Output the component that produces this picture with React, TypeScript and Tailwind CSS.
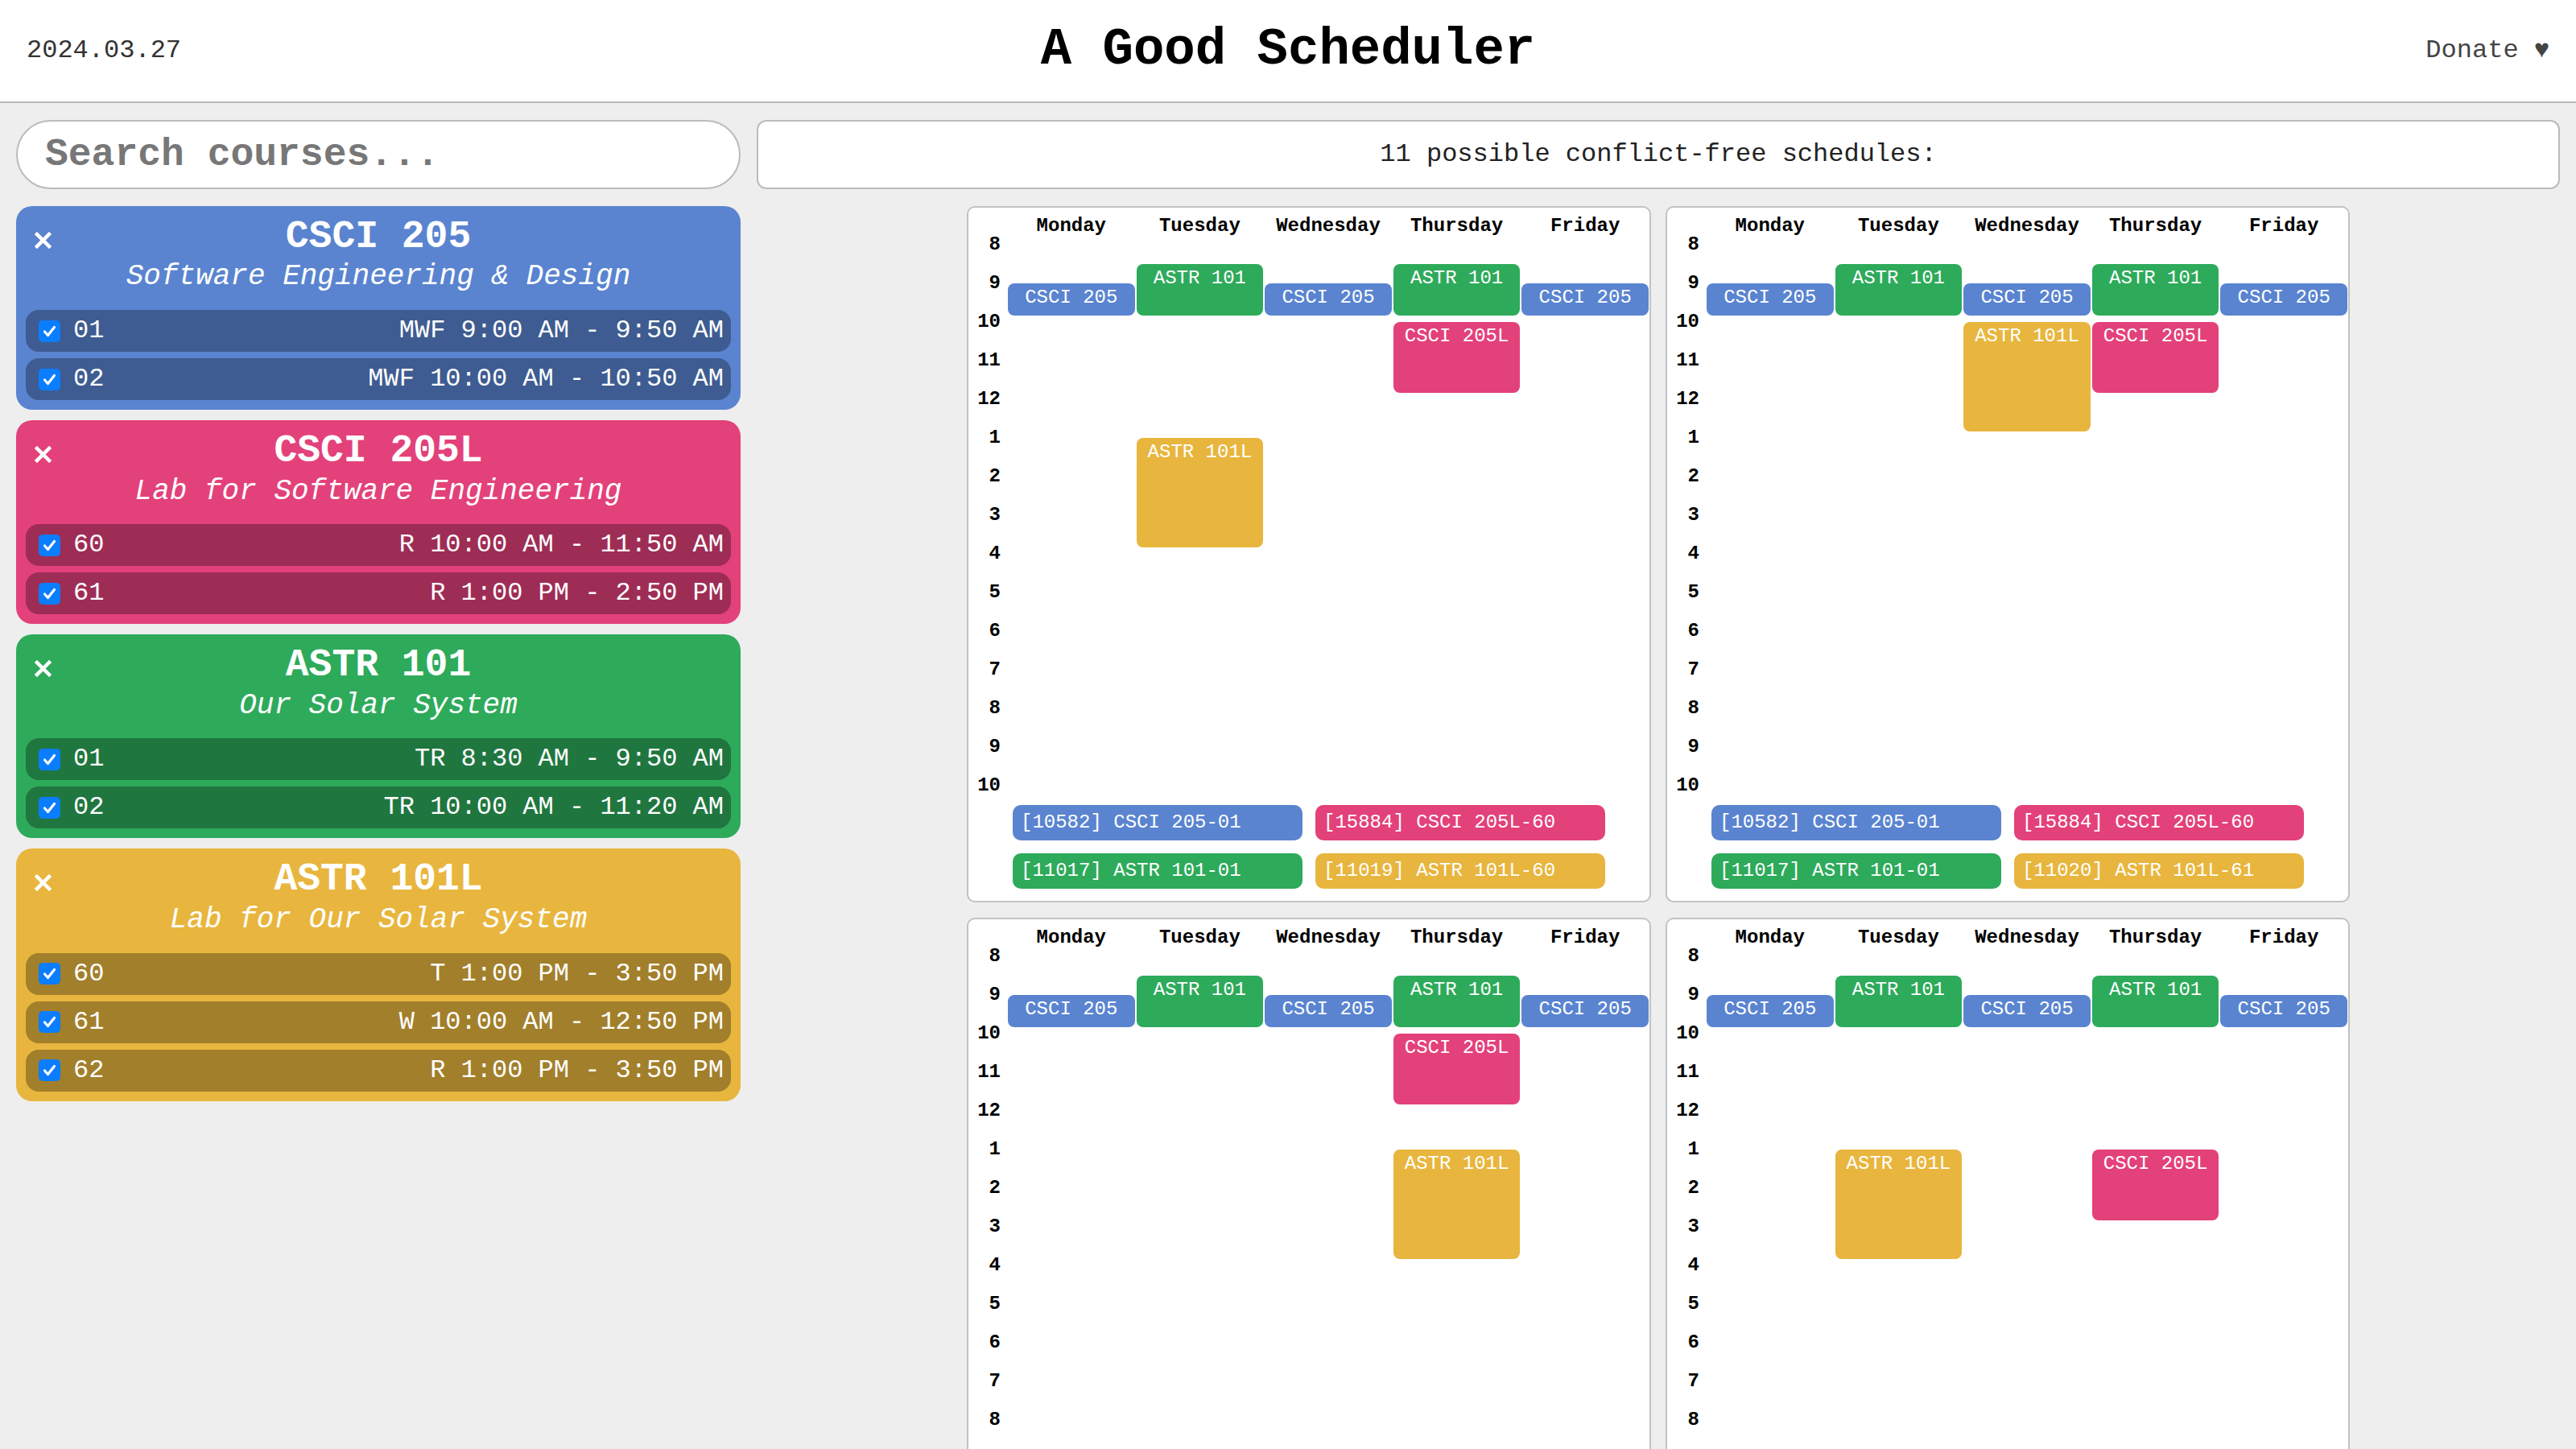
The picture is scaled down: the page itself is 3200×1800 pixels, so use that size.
import React from 'react';

type Section = { id: string; time: string };
type Course = { code: string; title: string; color: string; sections: Section[] };

const COLORS: Record<string, string> = {
  'CSCI 205': 'bg-[#5a84d0]',
  'CSCI 205L': 'bg-[#e3417a]',
  'ASTR 101': 'bg-[#2eaa5b]',
  'ASTR 101L': 'bg-[#e8b63e]',
};

const courses: Course[] = [
  {
    code: 'CSCI 205',
    title: 'Software Engineering & Design',
    color: COLORS['CSCI 205'],
    sections: [
      { id: '01', time: 'MWF 9:00 AM - 9:50 AM' },
      { id: '02', time: 'MWF 10:00 AM - 10:50 AM' },
    ],
  },
  {
    code: 'CSCI 205L',
    title: 'Lab for Software Engineering',
    color: COLORS['CSCI 205L'],
    sections: [
      { id: '60', time: 'R 10:00 AM - 11:50 AM' },
      { id: '61', time: 'R 1:00 PM - 2:50 PM' },
    ],
  },
  {
    code: 'ASTR 101',
    title: 'Our Solar System',
    color: COLORS['ASTR 101'],
    sections: [
      { id: '01', time: 'TR 8:30 AM - 9:50 AM' },
      { id: '02', time: 'TR 10:00 AM - 11:20 AM' },
    ],
  },
  {
    code: 'ASTR 101L',
    title: 'Lab for Our Solar System',
    color: COLORS['ASTR 101L'],
    sections: [
      { id: '60', time: 'T 1:00 PM - 3:50 PM' },
      { id: '61', time: 'W 10:00 AM - 12:50 PM' },
      { id: '62', time: 'R 1:00 PM - 3:50 PM' },
    ],
  },
];

// [day index, start minute, end minute]
type Meeting = [number, number, number];
type Pick = { code: string; crn: string; section: string; meetings: Meeting[] };

const CSCI205: Pick = { code: 'CSCI 205', crn: '10582', section: '01', meetings: [[0, 540, 590], [2, 540, 590], [4, 540, 590]] };
const ASTR101: Pick = { code: 'ASTR 101', crn: '11017', section: '01', meetings: [[1, 510, 590], [3, 510, 590]] };
const LAB60: Pick = { code: 'CSCI 205L', crn: '15884', section: '60', meetings: [[3, 600, 710]] };
const LAB61: Pick = { code: 'CSCI 205L', crn: '15885', section: '61', meetings: [[3, 780, 890]] };
const ALAB60: Pick = { code: 'ASTR 101L', crn: '11019', section: '60', meetings: [[1, 780, 950]] };
const ALAB61: Pick = { code: 'ASTR 101L', crn: '11020', section: '61', meetings: [[2, 600, 770]] };
const ALAB62: Pick = { code: 'ASTR 101L', crn: '11021', section: '62', meetings: [[3, 780, 950]] };

const schedules: Pick[][] = [
  [CSCI205, LAB60, ASTR101, ALAB60],
  [CSCI205, LAB60, ASTR101, ALAB61],
  [CSCI205, LAB60, ASTR101, ALAB62],
  [CSCI205, LAB61, ASTR101, ALAB60],
];

const DAYS = ['Monday', 'Tuesday', 'Wednesday', 'Thursday', 'Friday'];
const HOURS = [8, 9, 10, 11, 12, 1, 2, 3, 4, 5, 6, 7, 8, 9, 10];

const CheckBox = () => (
  <div className="flex h-[27px] w-[27px] shrink-0 items-center justify-center rounded-[5px] bg-[#0b7dff]">
    <svg width="19" height="19" viewBox="0 0 19 19" fill="none">
      <path d="M3.5 10 L7.5 14.5 L15.5 4.5" stroke="white" strokeWidth="3.2" strokeLinecap="round" strokeLinejoin="round" />
    </svg>
  </div>
);

const CourseCard = ({ course }: { course: Course }) => (
  <div className={`relative rounded-[20px] ${course.color} px-[12px] pb-[12px] pt-[11px] text-white`}>
    <svg className="absolute left-[23px] top-[32px]" width="21" height="21" viewBox="0 0 21 21">
      <path d="M3 3 L18 18 M18 3 L3 18" stroke="white" strokeWidth="4.5" strokeLinecap="square" />
    </svg>
    <div className="text-center text-[48px] font-bold leading-[1.133]">{course.code}</div>
    <div className="mb-[20px] mt-[3px] text-center text-[36px] italic leading-[1.133]">{course.title}</div>
    <div className="flex flex-col gap-[8px]">
      {course.sections.map((s) => (
        <div key={s.id} className="flex h-[52px] items-center gap-[16px] rounded-[16px] bg-black/30 pl-[16px] pr-[9px] text-[32px]">
          <CheckBox />
          <span>{s.id}</span>
          <span className="ml-auto">{s.time}</span>
        </div>
      ))}
    </div>
  </div>
);

const SchedulePanel = ({ picks }: { picks: Pick[] }) => (
  <div className="w-[850px] overflow-hidden rounded-[10px] border-2 border-[#c2c2c2] bg-white">
    {/* Day header */}
    <div className="flex h-[46px] items-center">
      <div className="w-[48px] shrink-0" />
      {DAYS.map((d) => (
        <div key={d} className="flex-1 text-center text-[24px] font-bold text-black">
          {d}
        </div>
      ))}
    </div>

    {/* Time grid */}
    <div className="flex">
      <div className="-mt-[24px] flex w-[48px] shrink-0 flex-col">
        {HOURS.map((h, i) => (
          <div key={i} className="flex h-[48px] items-center justify-end pr-[8px] text-[24px] font-bold text-black">
            {h}
          </div>
        ))}
      </div>
      <div className="relative flex-1">
        {picks.map((p) =>
          p.meetings.map(([day, start, end], i) => (
            <div
              key={p.code + i}
              className={`absolute rounded-[8px] ${COLORS[p.code]} text-center text-[24px] text-white`}
              style={{
                top: (start - 480) * 0.8,
                height: (end - start) * 0.8,
                left: `calc(${day * 20}% + 1px)`,
                width: 'calc(20% - 2px)',
              }}
            >
              {p.code}
            </div>
          ))
        )}
      </div>
    </div>

    {/* Legend */}
    <div className="grid grid-cols-[360px_360px] justify-center gap-[16px] pb-[15px]">
      {picks.map((p) => (
        <div key={p.crn} className={`flex h-[44px] items-center rounded-[10px] ${COLORS[p.code]} px-[10px] text-[24px] text-white`}>
          [{p.crn}] {p.code}-{p.section}
        </div>
      ))}
    </div>
  </div>
);

export default function App() {
  return (
    <div className="min-h-screen bg-[#eeeeee] font-['Liberation_Mono','Courier_New',monospace]">
      <header className="grid h-[128px] grid-cols-3 items-center border-b-2 border-[#bbbbbb] bg-white px-[33px]">
        <div className="text-[32px] text-[#333333]">2024.03.27</div>
        <h1 className="-mt-[3px] justify-self-center text-[64px] font-bold text-black">A Good Scheduler</h1>
        <div className="justify-self-end text-[32px] text-[#444444]">Donate ♥</div>
      </header>

      <main className="flex gap-[20px] px-[20px] pt-[21px]">
        <div className="flex w-[900px] shrink-0 flex-col gap-[21px]">
          <input
            type="text"
            placeholder="Search courses..."
            className="h-[86px] w-full rounded-full border-2 border-[#bbbbbb] bg-white px-[34px] text-[48px] font-bold text-[#333] outline-none placeholder:text-[#777777]"
          />
          <div className="flex flex-col gap-[13px]">
            {courses.map((c) => (
              <CourseCard key={c.code} course={c} />
            ))}
          </div>
        </div>

        <div className="flex min-w-0 flex-1 flex-col gap-[21px]">
          <div className="flex h-[86px] items-center justify-center rounded-[12px] border-2 border-[#bbbbbb] bg-white text-[32px] text-[#222222]">
            11 possible conflict-free schedules:
          </div>
          <div className="flex flex-wrap justify-center gap-x-[18px] gap-y-[19px] pb-[20px]">
            {schedules.map((s, i) => (
              <SchedulePanel key={i} picks={s} />
            ))}
          </div>
        </div>
      </main>
    </div>
  );
}
